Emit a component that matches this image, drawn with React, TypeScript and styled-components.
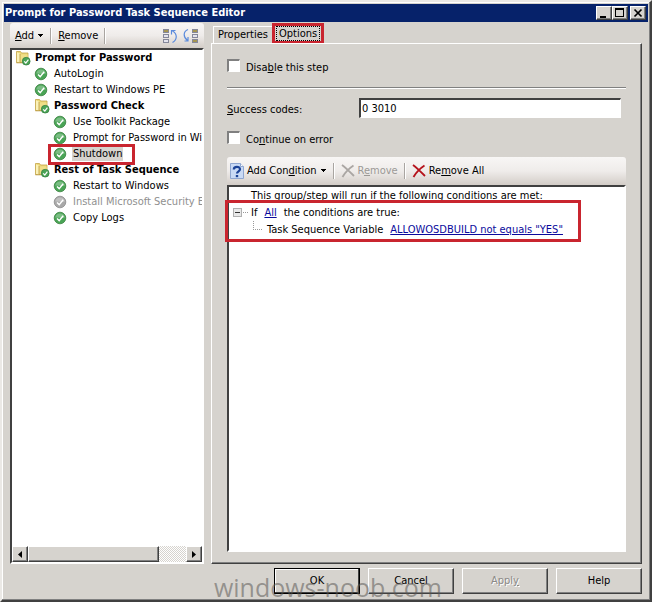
import React, { useState } from "react";
import styled, { createGlobalStyle, css } from "styled-components";

const face = "#d6d3ce";
const dark = "#404040";
const shade = "#808080";
const red = "#c9252f";

const GlobalStyle = createGlobalStyle`
  * { box-sizing: border-box; }
  body {
    margin: 0;
    background: ${face};
    color: #000;
    font: 11px/16px "DejaVu Sans Condensed", "Noto Sans", sans-serif;
  }
  button, input { font: inherit; color: inherit; }
  svg { flex-shrink: 0; }
  u { text-underline-offset: 1px; }
`;

const raised = css`
  border: 1px solid;
  border-color: #fff ${dark} ${dark} #fff;
  box-shadow: inset -1px -1px 0 ${shade};
`;

const sunken = css`
  border: 2px solid;
  border-color: ${dark} #fff #fff ${dark};
`;

const Window = styled.div`
  position: relative;
  min-height: 100vh;
  display: flex;
  flex-direction: column;
  padding: 2px;
  background: ${face};
  border: 2px solid;
  border-color: #ebe9e6 ${dark} ${dark} #ebe9e6;
  box-shadow: inset -1px -1px 0 ${shade}, inset 1px 1px 0 #fff;
`;

const TitleBar = styled.header`
  display: flex;
  align-items: center;
  height: 18px;
  padding: 0 2px 0 1px;
  background: #06226a;
  color: #fff;
`;

const Title = styled.h1`
  flex: 1;
  margin: 0;
  font-size: 11px;
  line-height: 18px;
  white-space: nowrap;
`;

const CaptionButton = styled.button<{ $gap?: boolean }>`
  ${raised}
  display: flex;
  width: 16px;
  height: 14px;
  padding: 0;
  margin-left: ${(p) => (p.$gap ? 2 : 0)}px;
  background: ${face};
`;

const Body = styled.main`
  flex: 1;
  display: grid;
  grid-template-columns: 194px minmax(0, 1fr);
  gap: 7px;
  padding: 1px 6px 0;
`;

const Sidebar = styled.section`
  display: flex;
  flex-direction: column;
  min-width: 0;
`;

const Toolbar = styled.div<{ $tall?: boolean }>`
  display: flex;
  align-items: center;
  height: ${(p) => (p.$tall ? 28 : 25)}px;
  padding: 0 ${(p) => (p.$tall ? 1 : 3)}px;
  border-radius: 3px 3px 0 0;
  background: linear-gradient(#f8f6f5, #efecea 50%, #d3cdc7);
`;

const ToolButton = styled.button`
  display: flex;
  align-items: center;
  gap: 3px;
  height: 22px;
  padding: 0 2px;
  border: 0;
  background: none;
  white-space: nowrap;
  &:disabled { color: #9b9996; }
`;

const Divider = styled.span`
  width: 2px;
  height: 16px;
  margin: 0 4px;
  border-left: 1px solid #a9a5a1;
  border-right: 1px solid #fff;
`;

const Spacer = styled.span`
  flex: 1;
`;

const TreeBox = styled.div`
  ${sunken}
  flex: 1;
  display: flex;
  flex-direction: column;
  overflow: hidden;
  background: #fff;
`;

const Tree = styled.ul`
  flex: 1;
  margin: 0;
  padding: 0 0 0 3px;
  list-style: none;
`;

const TreeRow = styled.li<{ $depth: number; $bold?: boolean; $off?: boolean }>`
  position: relative;
  display: flex;
  align-items: center;
  gap: 3px;
  height: 16px;
  padding-left: ${(p) => p.$depth * 19}px;
  font-weight: ${(p) => (p.$bold ? 700 : 400)};
  color: ${(p) => (p.$off ? "#8f8f8f" : "#000")};
  white-space: nowrap;
`;

const Label = styled.span<{ $selected?: boolean }>`
  height: 14px;
  padding: 0 1px;
  line-height: 14px;
  background: ${(p) => (p.$selected ? face : "none")};
`;

const StepMark = styled.span`
  position: absolute;
  inset: -2px 67px -3px 33px;
  border: 3px solid ${red};
`;

const ScrollBar = styled.div`
  display: flex;
  height: 16px;
  background: repeating-conic-gradient(#fff 0 25%, ${face} 0 50%) 0 0 / 2px 2px;
`;

const ScrollArrow = styled.button`
  ${raised}
  display: grid;
  place-items: center;
  width: 16px;
  padding: 0;
  background: ${face};
`;

const ScrollTrack = styled.div`
  flex: 1;
`;

const ScrollThumb = styled.div`
  ${raised}
  width: 83%;
  height: 100%;
  background: ${face};
`;

const TabArea = styled.section`
  display: flex;
  flex-direction: column;
  min-width: 0;
`;

const TabList = styled.div`
  display: flex;
  align-items: flex-end;
  height: 20px;
  padding-left: 2px;
`;

const Tab = styled.button<{ $active?: boolean }>`
  height: ${(p) => (p.$active ? 21 : 17)}px;
  margin-bottom: ${(p) => (p.$active ? -1 : 0)}px;
  padding: 0 ${(p) => (p.$active ? 1 : 4)}px;
  background: ${face};
  border: ${(p) => (p.$active ? `3px solid ${red}` : "1px solid #fff")};
  ${(p) => !p.$active && "border-right: 0; border-bottom: 0;"}
  line-height: 14px;
`;

const TabFocus = styled.span`
  display: block;
  padding: 0 2px;
  border: 1px dotted #000;
  line-height: 13px;
`;

const Panel = styled.div`
  flex: 1;
  display: flex;
  flex-direction: column;
  padding: 14px 15px 11px;
  border: 1px solid;
  border-color: #fff ${dark} ${dark} #fff;
  box-shadow: inset -1px -1px 0 ${shade};
`;

const CheckRow = styled.label`
  display: flex;
  align-items: center;
  gap: 6px;
  height: 20px;
`;

const CheckBox = styled.input`
  ${sunken}
  appearance: none;
  width: 13px;
  height: 13px;
  margin: 0 0 5px;
  background: #fff;
  border-width: 2px 1px 1px 2px;
  border-color: ${shade} #fff #fff ${shade};
  &:checked { background: linear-gradient(#000, #000) center / 5px 5px no-repeat #fff; }
`;

const Rule = styled.hr`
  width: 100%;
  height: 2px;
  margin: 9px 0;
  border: 0;
  border-top: 1px solid ${shade};
  border-bottom: 1px solid #fff;
`;

const Field = styled.div`
  display: grid;
  grid-template-columns: 132px minmax(0, 1fr);
  align-items: center;
  padding-right: 5px;
  margin-bottom: 12px;
`;

const FieldLabel = styled.label`
  padding-top: 3px;
`;

const TextBox = styled.input`
  ${sunken}
  width: 100%;
  height: 20px;
  padding: 0 1px;
  background: #fff;
  border-width: 2px 1px 1px 2px;
`;

const Conditions = styled.div`
  display: flex;
  flex: 1;
  flex-direction: column;
  margin-top: 7px;
`;

const ConditionBox = styled.div`
  ${sunken}
  position: relative;
  flex: 1;
  background: #fff;
`;

const ConditionRow = styled.div<{ $indent: number }>`
  display: flex;
  align-items: center;
  height: 17px;
  padding-left: ${(p) => p.$indent}px;
  white-space: nowrap;
`;

const ConditionLink = styled.a`
  margin: 0 7px;
  color: #0a0a9c;
  text-underline-offset: 1px;
`;

const ConditionMark = styled.div`
  position: absolute;
  top: 13px;
  left: -4px;
  width: 356px;
  height: 42px;
  border: 3px solid ${red};
  pointer-events: none;
`;

const Footer = styled.footer`
  display: flex;
  justify-content: flex-end;
  gap: 8px;
  padding: 4px 6px 4px;
`;

const DialogButton = styled.button<{ $primary?: boolean }>`
  width: 86px;
  height: 26px;
  padding: 0;
  background: ${face};
  border: 1px solid;
  border-color: ${(p) => (p.$primary ? "#000" : `#fff ${dark} ${dark} #fff`)};
  box-shadow: inset -1px -1px 0 ${(p) => (p.$primary ? dark : shade)}
    ${(p) => (p.$primary ? ", inset 1px 1px 0 #fff" : "")};
  &:disabled { color: #8c8986; text-shadow: 1px 1px 0 #fff; }
`;

const Watermark = styled.span`
  position: absolute;
  right: 208px;
  bottom: 0;
  font: 25px/26px "Open Sans", sans-serif;
  color: rgba(90, 88, 85, 0.55);
  pointer-events: none;
`;

const Caret = () => (
  <svg width="7" height="4" viewBox="0 0 7 4" shapeRendering="crispEdges">
    <path d="M0.5 0h6L3.5 3.5z" />
  </svg>
);

const Check = ({ off }: { off?: boolean }) => (
  <svg width="16" height="16" viewBox="0 0 16 16">
    <circle cx="7" cy="8" r="5.8" fill={off ? "#a8a8a8" : "#49a455"} stroke={off ? "#8c8c8c" : "#38823f"} strokeWidth="0.8" />
    <path d="M2.2 7.5a4.9 4.9 0 0 1 9.6 0c-3 1.2-6 0-9.6 0z" fill="#fff" opacity="0.28" />
    <path d="M4 8.4l2.2 2.2 4-4.8" fill="none" stroke="#fff" strokeWidth="1.4" />
  </svg>
);

const Folder = () => (
  <svg width="16" height="16" viewBox="0 0 16 16">
    <path d="M1.5 1.5h4l1 1.5h6.5v9.5H1.5z" fill="#ecd878" stroke="#c4a548" strokeWidth="0.8" />
    <path d="M2 2.2l3 1.6v9L2 12z" fill="#fbf2b8" />
    <path d="M5 4.5h7.5V12H5z" fill="#f0df88" />
    <path d="M5 4v8.6M1.4 12.8h6" stroke="#b8963a" strokeWidth="0.8" />
    <circle cx="11.2" cy="11.2" r="3.9" fill="#4ba457" stroke="#337b3d" strokeWidth="0.7" />
    <path d="M9.2 11.4l1.6 1.6 2.6-3.3" fill="none" stroke="#fff" strokeWidth="1.2" />
  </svg>
);

const Reorder = ({ down }: { down?: boolean }) => {
  const x = down ? 9 : 0;
  const colors = down ? ["#a59551", "#e4e4ee", "#a59551"] : ["#a59551", "#e4e4ee", "#e4e4ee"];
  return (
    <svg width="16" height="16" viewBox="0 0 16 16">
      {colors.map((c, i) => (
        <rect key={i} x={x + 0.5} y={1.5 + i * 5} width="5" height="3" fill={c} stroke="#85889a" />
      ))}
      {down ? (
        <path d="M5 1.5C0 3.5 0 9 4.5 12.5M5 9v4H1.5" fill="none" stroke="#5b8bdc" strokeWidth="1.2" />
      ) : (
        <path d="M9.5 14.5c5-3 5-8.5 0-11.5M12.5 2.5H8.5v4" fill="none" stroke="#5b8bdc" strokeWidth="1.2" />
      )}
    </svg>
  );
};

const Cross = ({ color }: { color: string }) => (
  <svg width="14" height="14" viewBox="0 0 14 14">
    <path d="M1 1c4 3 8 7 12 11M12.5 1.5C8 4.5 4 8.5 1.5 13" fill="none" stroke={color} strokeWidth="1.8" />
  </svg>
);

const Question = () => (
  <svg width="14" height="16" viewBox="0 0 14 16">
    <path d="M0.5 0.5h10l3 3v12H0.5z" fill="#c9daf5" stroke="#8fa6d0" />
    <path d="M10.5 0.5v3h3" fill="#fff" stroke="#8fa6d0" />
    <path d="M3.8 6.4C3.8 3 10 3 10 6.2c0 2.2-3 2-3 4.4" fill="none" stroke="#1b4296" strokeWidth="2.2" />
    <path d="M5.8 12h2.4v2.2H5.8z" fill="#1b4296" />
  </svg>
);

const steps = [
  { text: "Prompt for Password", depth: 0, group: true },
  { text: "AutoLogin", depth: 1 },
  { text: "Restart to Windows PE", depth: 1 },
  { text: "Password Check", depth: 1, group: true },
  { text: "Use Toolkit Package", depth: 2 },
  { text: "Prompt for Password in Windows PE", depth: 2 },
  { text: "Shutdown", depth: 2, selected: true },
  { text: "Rest of Task Sequence", depth: 1, group: true },
  { text: "Restart to Windows", depth: 2 },
  { text: "Install Microsoft Security Essentials", depth: 2, off: true },
  { text: "Copy Logs", depth: 2 },
];

export default function App() {
  const [disabled, setDisabled] = useState(false);
  const [proceed, setProceed] = useState(false);
  const [codes, setCodes] = useState("0 3010");

  return (
    <>
      <GlobalStyle />
      <Window>
        <TitleBar>
          <Title>Prompt for Password Task Sequence Editor</Title>
          <CaptionButton aria-label="Minimize">
            <svg width="14" height="12"><path d="M3 9h6v2H3z" /></svg>
          </CaptionButton>
          <CaptionButton aria-label="Maximize">
            <svg width="14" height="12" shapeRendering="crispEdges">
              <path d="M2 1h9v9H2zM3 3v6h7V3z" fillRule="evenodd" />
            </svg>
          </CaptionButton>
          <CaptionButton aria-label="Close" $gap>
            <svg width="14" height="12"><path d="M3.5 2.5l7 7M10.5 2.5l-7 7" stroke="#000" strokeWidth="1.7" /></svg>
          </CaptionButton>
        </TitleBar>

        <Body>
          <Sidebar>
            <Toolbar>
              <ToolButton><span><u>A</u>dd</span> <Caret /></ToolButton>
              <Divider />
              <ToolButton><span><u>R</u>emove</span></ToolButton>
              <Divider />
              <Spacer />
              <ToolButton aria-label="Move up"><Reorder /></ToolButton>
              <ToolButton aria-label="Move down"><Reorder down /></ToolButton>
            </Toolbar>
            <TreeBox>
              <Tree>
                {steps.map((s) => (
                  <TreeRow key={s.text} $depth={s.depth} $bold={s.group} $off={s.off}>
                    {s.group ? <Folder /> : <Check off={s.off} />}
                    <Label $selected={s.selected}>{s.text}</Label>
                    {s.selected && <StepMark />}
                  </TreeRow>
                ))}
              </Tree>
              <ScrollBar>
                <ScrollArrow aria-label="Scroll left">
                  <svg width="4" height="7"><path d="M4 0v7L0 3.5z" /></svg>
                </ScrollArrow>
                <ScrollTrack><ScrollThumb /></ScrollTrack>
                <ScrollArrow aria-label="Scroll right">
                  <svg width="4" height="7"><path d="M0 0v7l4-3.5z" /></svg>
                </ScrollArrow>
              </ScrollBar>
            </TreeBox>
          </Sidebar>

          <TabArea>
            <TabList role="tablist">
              <Tab role="tab">Properties</Tab>
              <Tab role="tab" aria-selected $active><TabFocus>Options</TabFocus></Tab>
            </TabList>
            <Panel>
              <CheckRow>
                <CheckBox type="checkbox" checked={disabled} onChange={() => setDisabled(!disabled)} />
                <span>Disa<u>b</u>le this step</span>
              </CheckRow>
              <Rule />
              <Field>
                <FieldLabel htmlFor="codes"><u>S</u>uccess codes:</FieldLabel>
                <TextBox id="codes" value={codes} onChange={(e) => setCodes(e.target.value)} />
              </Field>
              <CheckRow>
                <CheckBox type="checkbox" checked={proceed} onChange={() => setProceed(!proceed)} />
                <span>Co<u>n</u>tinue on error</span>
              </CheckRow>
              <Conditions>
                <Toolbar $tall>
                  <ToolButton><Question /> <span>Add Con<u>d</u>ition</span> <Caret /></ToolButton>
                  <Divider />
                  <ToolButton disabled><Cross color="#aaa6a3" /> <span>R<u>e</u>move</span></ToolButton>
                  <Divider />
                  <ToolButton><Cross color="#b5121b" /> <span>Re<u>m</u>ove All</span></ToolButton>
                </Toolbar>
                <ConditionBox>
                  <ConditionRow $indent={22}>This group/step will run if the following conditions are met:</ConditionRow>
                  <ConditionRow $indent={4}>
                    <svg width="18" height="17" shapeRendering="crispEdges">
                      <rect x="0.5" y="4.5" width="8" height="8" fill="#e9e9e9" stroke="#b0b0b0" />
                      <path d="M2 8.5h5" stroke="#333" />
                      <path d="M10 8.5h5" stroke="#999" strokeDasharray="1 1" />
                    </svg>
                    If <ConditionLink href="#all">All</ConditionLink> the conditions are true:
                  </ConditionRow>
                  <ConditionRow $indent={22}>
                    <svg width="16" height="17" shapeRendering="crispEdges">
                      <path d="M2.5 0v8.5h9" fill="none" stroke="#999" strokeDasharray="1 1" />
                    </svg>
                    Task Sequence Variable
                    <ConditionLink href="#variable">ALLOWOSDBUILD not equals "YES"</ConditionLink>
                  </ConditionRow>
                  <ConditionMark />
                </ConditionBox>
              </Conditions>
            </Panel>
          </TabArea>
        </Body>

        <Footer>
          <DialogButton $primary>OK</DialogButton>
          <DialogButton>Cancel</DialogButton>
          <DialogButton disabled>Appl<u>y</u></DialogButton>
          <DialogButton>Help</DialogButton>
        </Footer>
        <Watermark>windows-noob.com</Watermark>
      </Window>
    </>
  );
}
